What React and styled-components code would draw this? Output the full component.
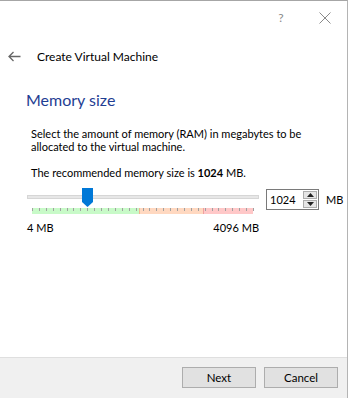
import React from "react";
import styled, { createGlobalStyle } from "styled-components";

const Global = createGlobalStyle`
  html, body { margin: 0; padding: 0; background: #ffffff; }
  body { font-family: "Lato", "Liberation Sans", sans-serif; font-size: 11px; color: #000; }
  * { box-sizing: border-box; }
`;

const Window = styled.div`
  width: 348px;
  height: 398px;
  border-top: 1px solid #a6a6a6;
  border-right: 1px solid #b4b4b4;
  display: flex;
  flex-direction: column;
  background: #fff;
`;

const TitleBar = styled.div`
  height: 33px;
  display: flex;
  justify-content: flex-end;
  align-items: center;
`;

const TitleButton = styled.div`
  width: 44px;
  height: 30px;
  display: flex;
  align-items: center;
  justify-content: center;
  color: #8a8a8a;
  font-size: 12px;
`;

const Header = styled.div`
  height: 44px;
  display: flex;
  align-items: center;
  padding-left: 8px;
  gap: 16px;
`;

const HeaderTitle = styled.div`
  font-size: 12px;
  color: #000;
`;

const Content = styled.div`
  flex: 1;
  padding: 12px 0 0 26px;
  display: flex;
  flex-direction: column;
`;

const Heading = styled.h1`
  margin: 0;
  font-weight: 400;
  font-size: 16px;
  line-height: 20px;
  color: #1f3e93;
`;

const Body = styled.div`
  padding-left: 5px;
  margin-top: 17px;
`;

const Para = styled.p`
  margin: 0 0 ${(p) => p.gap || 0}px 0;
  line-height: 13px;
  font-size: 11px;
`;

const SliderRow = styled.div`
  display: flex;
  align-items: flex-start;
  margin-top: 9px;
  margin-left: -4px;
`;

const SliderArea = styled.div`
  position: relative;
  width: 232px;
  height: 48px;
`;

const Track = styled.div`
  margin-top: 7px;
  height: 4px;
  background: #e7e7e7;
  border: 1px solid #d6d6d6;
`;

const Thumb = styled.div`
  position: absolute;
  left: 55px;
  top: 0;
  width: 11px;
  height: 19px;
  background: #0078d7;
  clip-path: polygon(0 0, 100% 0, 100% 74%, 50% 100%, 0 74%);
`;

const Ticks = styled.div`
  display: flex;
  height: 6px;
  margin: 9px 5px 0 5px;
`;

const Zone = styled.div`
  height: 6px;
  background: ${(p) => p.color};
  border-left: ${(p) => (p.edge ? `1px solid ${p.edge}` : "none")};
`;

const TickLayer = styled.svg`
  position: absolute;
  left: 5px;
  top: 20px;
`;

const Labels = styled.div`
  display: flex;
  justify-content: space-between;
  margin-top: 7px;
  font-size: 11px;
  line-height: 14px;
`;

const SpinWrap = styled.div`
  display: flex;
  align-items: center;
  margin-left: 7px;
  margin-top: 1px;
  gap: 7px;
`;

const SpinBox = styled.div`
  width: 53px;
  height: 21px;
  border: 1px solid #7a7a7a;
  display: flex;
  align-items: center;
  justify-content: space-between;
  padding: 0 1px 0 3px;
  font-size: 11px;
`;

const SpinButtons = styled.div`
  width: 14px;
  height: 17px;
  display: flex;
  flex-direction: column;
  gap: 1px;
`;

const SpinBtn = styled.div`
  flex: 1;
  background: #e5e5e5;
  border: 1px solid #acacac;
  display: flex;
  align-items: center;
  justify-content: center;
`;

const Unit = styled.span`
  font-size: 11px;
`;

const Footer = styled.div`
  height: 41px;
  background: #f0f0f0;
  border-top: 1px solid #dfdfdf;
  display: flex;
  justify-content: flex-end;
  align-items: center;
  gap: 8px;
  padding: 0 9px 2px 0;
`;

const Button = styled.button`
  width: 74px;
  height: 21px;
  background: #e1e1e1;
  border: 1px solid #adadad;
  font-family: inherit;
  font-size: 11.5px;
  color: #000;
  padding: 0;
`;

function TickMarks() {
  const n = 32;
  const w = 221;
  const lines = [];
  for (let i = 0; i <= n; i++) {
    const x = Math.round((i * w) / n) + 0.5;
    lines.push(<line key={i} x1={x} y1={0} x2={x} y2={3} stroke="#a0a0a0" strokeWidth="1" />);
  }
  return (
    <TickLayer width={w + 1} height={6}>
      {lines}
    </TickLayer>
  );
}

export default function App() {
  return (
    <>
      <Global />
      <Window>
        <TitleBar>
          <TitleButton>?</TitleButton>
          <TitleButton>
            <svg width="12" height="12" viewBox="0 0 12 12">
              <path d="M0.5 0.5 L11.5 11.5 M11.5 0.5 L0.5 11.5" stroke="#8a8a8a" strokeWidth="1" />
            </svg>
          </TitleButton>
        </TitleBar>
        <Header>
          <svg width="13" height="11" viewBox="0 0 13 11">
            <path d="M1 5.5 H12.5 M5.5 1 L1 5.5 L5.5 10" stroke="#666" strokeWidth="1.3" fill="none" />
          </svg>
          <HeaderTitle>Create Virtual Machine</HeaderTitle>
        </Header>
        <Content>
          <Heading>Memory size</Heading>
          <Body>
            <Para gap={13}>
              Select the amount of memory (RAM) in megabytes to be
              <br />
              allocated to the virtual machine.
            </Para>
            <Para>
              The recommended memory size is <b>1024</b> MB.
            </Para>
            <SliderRow>
              <SliderArea>
                <Track />
                <Thumb />
                <Ticks>
                  <Zone color="#c8fac8" style={{ width: 107 }} />
                  <Zone color="#ffd8c0" edge="#f0b890" style={{ width: 64 }} />
                  <Zone color="#ffc8c8" edge="#f0a0a0" style={{ width: 50 }} />
                </Ticks>
                <TickMarks />
                <Labels>
                  <span>4 MB</span>
                  <span>4096 MB</span>
                </Labels>
              </SliderArea>
              <SpinWrap>
                <SpinBox>
                  <span>1024</span>
                  <SpinButtons>
                    <SpinBtn>
                      <svg width="7" height="4" viewBox="0 0 7 4"><path d="M0 4 L3.5 0 L7 4 Z" fill="#222" /></svg>
                    </SpinBtn>
                    <SpinBtn>
                      <svg width="7" height="4" viewBox="0 0 7 4"><path d="M0 0 L3.5 4 L7 0 Z" fill="#222" /></svg>
                    </SpinBtn>
                  </SpinButtons>
                </SpinBox>
                <Unit>MB</Unit>
              </SpinWrap>
            </SliderRow>
          </Body>
        </Content>
        <Footer>
          <Button>Next</Button>
          <Button>Cancel</Button>
        </Footer>
      </Window>
    </>
  );
}
